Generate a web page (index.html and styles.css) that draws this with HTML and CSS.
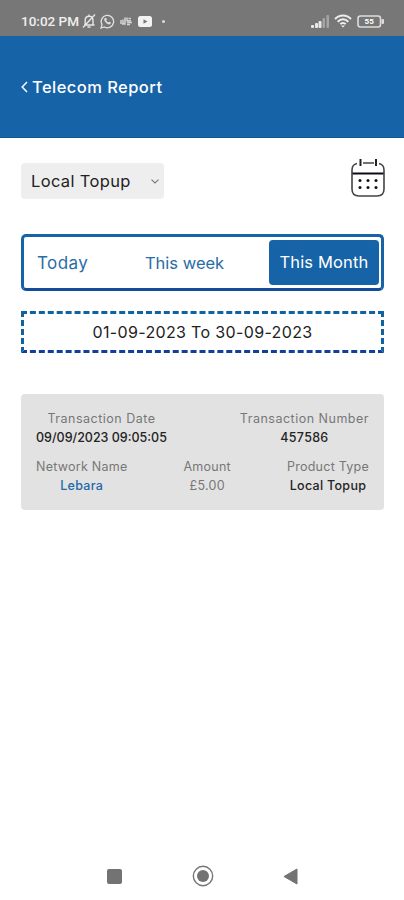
FILE: index.html
```html
<!DOCTYPE html>
<html lang="en">
<head>
    <meta charset="UTF-8">
    <meta name="viewport" content="width=device-width, initial-scale=1.0">
    <title>Telecom Report</title>
    <link rel="stylesheet" href="styles.css">
</head>
<body>
    <div class="status-bar">
        <span class="time">10:02 PM</span>
        <svg class="bell" width="14" height="16" viewBox="0 0 14 16" fill="none" stroke="#e6e6e6" stroke-width="1.4">
            <path d="M2 12h10.5M3.2 12V7.5C3.2 5 4.7 3.2 7 3.2S11 5 11 7.5V12M5.5 14h3M7 1.5v2M1 14.5L13 1.5"/>
        </svg>
        <svg class="whatsapp" width="15" height="15" viewBox="0 0 15 15">
            <path d="M1 14l1-3.4A6.2 6.2 0 1 1 4.4 13z" fill="none" stroke="#e0e0e0" stroke-width="1.3"/>
            <path d="M5 4l1.2.1.7 1.6-.7.9c.5 1 1.2 1.6 2.2 2l.9-.8 1.6.8c0 1.3-.9 1.9-2 1.8C6.5 10 4.3 7.5 4.2 5.5 4.2 4.8 4.5 4.3 5 4z" fill="#e0e0e0"/>
        </svg>
        <svg class="hand" width="13" height="10" viewBox="0 0 13 10" fill="none" stroke="#d4d4d4" stroke-width="1.5">
            <path d="M1 4v4M3 3.5V8M5 1.5V8H2M7 1.5v3.2h4M7 6.5h5M7 8.5h3M8.5 2.5H11"/>
        </svg>
        <svg class="youtube" width="14" height="11" viewBox="0 0 14 11">
            <rect width="14" height="11" rx="2.5" fill="#f2f2f2"/>
            <path d="M5.5 3.2v4.6l4-2.3z" fill="#777"/>
        </svg>
        <span class="dot"></span>
        <svg class="signal" width="18" height="13" viewBox="0 0 18 13" fill="#e8e8e8">
            <rect x="0" y="10" width="3" height="3" rx="1"/>
            <rect x="4" y="8" width="3" height="5" rx="1"/>
            <rect x="7.5" y="6" width="3" height="7" rx="1"/>
            <rect x="11.5" y="3" width="2.5" height="10" rx="1" fill="#a5a5a5"/>
            <rect x="15.5" y="0" width="2.5" height="13" rx="1" fill="#a5a5a5"/>
        </svg>
        <svg class="wifi" width="18" height="14" viewBox="0 0 18 14" fill="none" stroke="#eee" stroke-width="2">
            <path d="M1 5C5.5.2 12.5.2 17 5M3.7 7.7c3-3.2 7.6-3.2 10.6 0M6.3 10.1c1.500-1.600 3.900-1.600 5.400 0"/>
            <path d="M7 11.5h4L9 13.6z" fill="#eee" stroke="none"/>
        </svg>
        <svg class="battery" width="27" height="13" viewBox="0 0 27 13">
            <rect x="1" y="1" width="22.5" height="11" rx="2.5" fill="none" stroke="#ddd" stroke-width="1.6"/>
            <rect x="24.5" y="4" width="2.5" height="5" rx="1" fill="#ddd"/>
            <text x="12.2" y="9.4" text-anchor="middle">55</text>
        </svg>
    </div>

    <header class="header">
        <svg width="7" height="12" viewBox="0 0 7 12" fill="none" stroke="#fff" stroke-width="1.5">
            <path d="M6 1L1.2 6 6 11"/>
        </svg>
        <h1>Telecom Report</h1>
    </header>

    <main class="content">
        <div class="filter-row">
            <div class="select">
                <span>Local Topup</span>
                <svg width="8" height="5" viewBox="0 0 8 5" fill="none" stroke="#777" stroke-width="1.1">
                    <path d="M.5.7L4 4 7.5.7"/>
                </svg>
            </div>
            <svg class="calendar" width="34" height="38" viewBox="0 0 34 38" fill="none" stroke="#222" stroke-width="1.6">
                <path d="M6 4.500Q1 5.500 1 11v19q0 7 7 7h18q7 0 7-7V11q0-5.500-5-6.500M12 4h11" stroke="#444"/>
                <path d="M1.500 14.500h31" stroke="#0b0b16" stroke-width="2"/>
                <path d="M9.500 0v7M25 0v7" stroke-width="2"/>
                <g fill="#111" stroke="none">
                    <circle cx="9" cy="21.5" r="1.500"/>
                    <circle cx="17" cy="21.5" r="1.500"/>
                    <circle cx="25" cy="21.5" r="1.500"/>
                    <circle cx="9" cy="28.5" r="1.500"/>
                    <circle cx="17" cy="28.5" r="1.500"/>
                    <circle cx="25" cy="28.5" r="1.500"/>
                </g>
            </svg>
        </div>

        <div class="tabs">
            <span class="tab today">Today</span>
            <span class="tab week">This week</span>
            <span class="tab active">This Month</span>
        </div>

        <div class="range">01-09-2023 To 30-09-2023</div>

        <div class="card">
            <div class="row">
                <div class="field">
                    <span class="label date-label">Transaction Date</span>
                    <span class="value date-value">09/09/2023 09:05:05</span>
                </div>
                <div class="field">
                    <span class="label number-label">Transaction Number</span>
                    <span class="value">457586</span>
                </div>
            </div>
            <div class="row">
                <div class="field">
                    <span class="label">Network Name</span>
                    <span class="value network">Lebara</span>
                </div>
                <div class="field">
                    <span class="label">Amount</span>
                    <span class="value amount">£5.00</span>
                </div>
                <div class="field">
                    <span class="label">Product Type</span>
                    <span class="value">Local Topup</span>
                </div>
            </div>
        </div>
    </main>

    <nav class="nav-bar">
        <svg width="15" height="15" viewBox="0 0 15 15"><rect width="15" height="15" rx="2" fill="#737373"/></svg>
        <svg width="22" height="22" viewBox="0 0 22 22">
            <circle cx="11" cy="11" r="9.7" fill="none" stroke="#777" stroke-width="1.4"/>
            <circle cx="11" cy="11" r="6" fill="#737373"/>
        </svg>
        <svg width="15" height="17" viewBox="0 0 15 17"><path d="M14 1v15L1 8.500z" fill="#737373" stroke="#737373" stroke-linejoin="round"/></svg>
    </nav>
</body>
</html>
```
FILE: styles.css
```css
* { box-sizing: border-box; }
body { margin: 0; height: 900px; display: flex; flex-direction: column; background: #fff; font-family: Inter, "Open Sans", sans-serif; color: #222; }
svg { display: block; flex-shrink: 0; }

.status-bar { height: 36px; background: #777; display: flex; align-items: center; padding: 6px 21px 0; }
.time { width: 58px; font-family: Roboto, sans-serif; font-size: 13.5px; font-weight: 500; color: #efefef; white-space: nowrap; }
.bell { margin-left: 3px; }
.whatsapp { margin-left: 4px; }
.hand { margin-left: 5px; }
.youtube { margin-left: 5px; }
.dot { width: 3px; height: 3px; border-radius: 50%; background: #ddd; margin-left: 10px; }
.signal { margin-left: auto; }
.wifi { margin-left: 5px; }
.battery { margin-left: 5px; margin-right: -1px; }
.battery text { font: bold 8px Roboto, sans-serif; fill: #fff; }

.header { height: 102px; background: #1763a7; display: flex; align-items: center; gap: 4px; padding-left: 21px; color: #fff; border-bottom: 1px solid #125694; }
.header h1 { margin: 0; font-size: 16.5px; font-weight: 500; letter-spacing: 0.45px; }

.content { padding: 20px 20px 0 21px; flex: 1; }
.filter-row { display: flex; justify-content: space-between; height: 42px; }
.select { width: 143px; height: 36px; margin-top: 5px; padding: 0 5px 0 10px; background: #eeeeef; border-radius: 4px; display: flex; align-items: center; justify-content: space-between; font-size: 16.5px; letter-spacing: 0.35px; }
.calendar { margin-top: 1px; margin-right: -1px; }

.tabs { height: 57px; margin-top: 34px; padding: 3px 2px 3px 13px; border: 3px solid #1763a7; border-bottom-color: #144e9b; border-radius: 5px; display: flex; align-items: center; justify-content: space-between; font-size: 16.5px; color: #2a6ca5; }
.today { font-size: 17px; letter-spacing: 0.4px; }
.week { margin-left: 12px; }
.tab.active { width: 110px; height: 45px; line-height: 45px; text-align: center; background: #1763a7; color: #fff; border-radius: 4px; letter-spacing: 0.15px; }

.range { height: 42px; margin-top: 20px; border: 3px dashed #0f63a0; border-bottom-color: #123f9c; line-height: 37px; text-align: center; font-size: 16px; letter-spacing: 0.35px; }

.card { height: 116px; margin-top: 41px; padding: 16px 15px 0; background: #e2e2e2; border-radius: 4px; }
.row { display: flex; justify-content: space-between; margin-bottom: 11px; }
.field { text-align: center; }
.label, .value { display: block; height: 18px; line-height: 18px; font-size: 12.5px; }
.label { color: #777; letter-spacing: 0.25px; }
.number-label, .date-label { letter-spacing: 0.5px; }
.value { height: 19px; line-height: 19px; font-weight: 500; letter-spacing: 0.3px; color: #242424; }
.date-value { letter-spacing: 0; }
.network { color: #2168aa; }
.amount { color: #777; font-weight: 400; }

.nav-bar { height: 48px; display: flex; align-items: center; justify-content: space-between; padding: 0 106px 0 107px; }
```
